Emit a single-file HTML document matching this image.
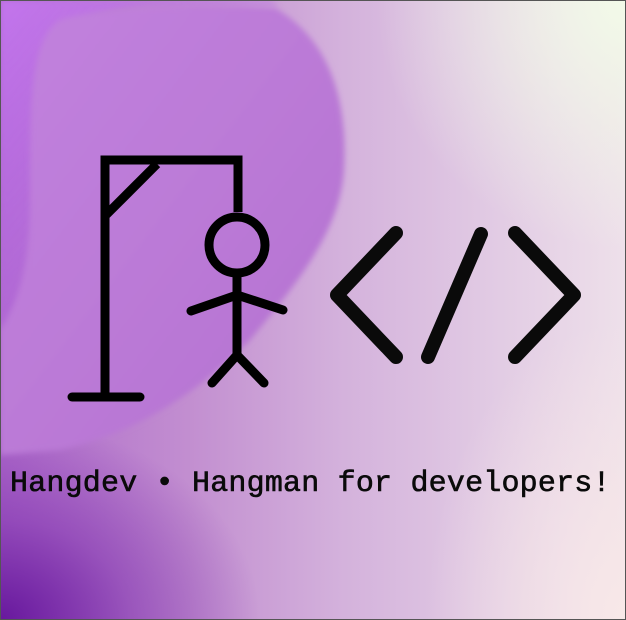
<!DOCTYPE html>
<html><head><meta charset="utf-8"><style>
html,body{margin:0;padding:0;}
body{width:626px;height:620px;overflow:hidden;position:relative;
background:
radial-gradient(ellipse 260px 200px at 0% 100%,rgba(100,20,155,0.95),rgba(120,40,170,0.5) 50%,rgba(150,80,190,0) 100%),
radial-gradient(ellipse 250px 250px at 100% 0%,#f2fae8,rgba(240,245,235,0) 100%),
radial-gradient(ellipse 200px 300px at 100% 100%,#f8e8e8,rgba(248,232,232,0) 100%),
linear-gradient(to right,#ae6acb 0%,#c28ed0 30%,#d4b2dc 55%,#e2cce4 80%,#eee0ea 100%);}
.fr{position:absolute;inset:0;border:1px solid #555;box-sizing:border-box;}
svg{position:absolute;left:0;top:0;}
.t{position:absolute;left:10px;top:464px;font:30px/40px "Liberation Mono",monospace;color:#0a0a0a;white-space:nowrap;letter-spacing:0.2px;-webkit-text-stroke:0.6px #0a0a0a;}
</style></head><body>
<svg width="626" height="620">
<defs>
<filter id="b" x="-20%" y="-20%" width="140%" height="140%"><feGaussianBlur stdDeviation="3"/></filter>
<linearGradient id="g" x1="0" y1="0" x2="1" y2="1"><stop offset="0" stop-color="#c282de"/><stop offset="1" stop-color="#b472d0"/></linearGradient>
<linearGradient id="tl" x1="0" y1="0" x2="1" y2="1"><stop offset="0" stop-color="#c878f5"/><stop offset="1" stop-color="#a050d0" stop-opacity="0"/></linearGradient>
</defs>
<path d="M0 0 L0 330 C40 300 60 200 50 100 C45 40 80 8 150 6 L280 6 L270 0 Z" fill="url(#tl)" opacity="0.8" filter="url(#b)"/>
<path d="M60 20 C100 6 200 4 275 8 C330 40 348 100 344 170 C340 230 300 280 250 340 C210 380 150 430 60 450 L0 455 L0 330 C20 300 30 260 30 200 C30 100 30 40 60 20 Z" fill="url(#g)" filter="url(#b)"/>
<g stroke="#000" stroke-width="9" stroke-linecap="round" fill="none">
<path d="M105 395 V160 H238 V212" stroke-linecap="butt"/>
<path d="M72 397 H140"/>
<path d="M106 215 L157 164" stroke-linecap="butt"/>
<circle cx="237" cy="245" r="28"/>
<path d="M237 273 V355 M191 311 L237 295 L283 310 M212 383 L237 355 L264 383"/>
</g>
<g stroke="#0a0a0a" stroke-width="14" stroke-linecap="round" stroke-linejoin="round" fill="none">
<path d="M396 233 L337 295 L396 357"/>
<path d="M481 234 L428 357"/>
<path d="M515 233 L574 295 L515 357"/>
</g>
</svg>
<div class="t">Hangdev • Hangman for developers!</div>
<div class="fr"></div>
</body></html>
